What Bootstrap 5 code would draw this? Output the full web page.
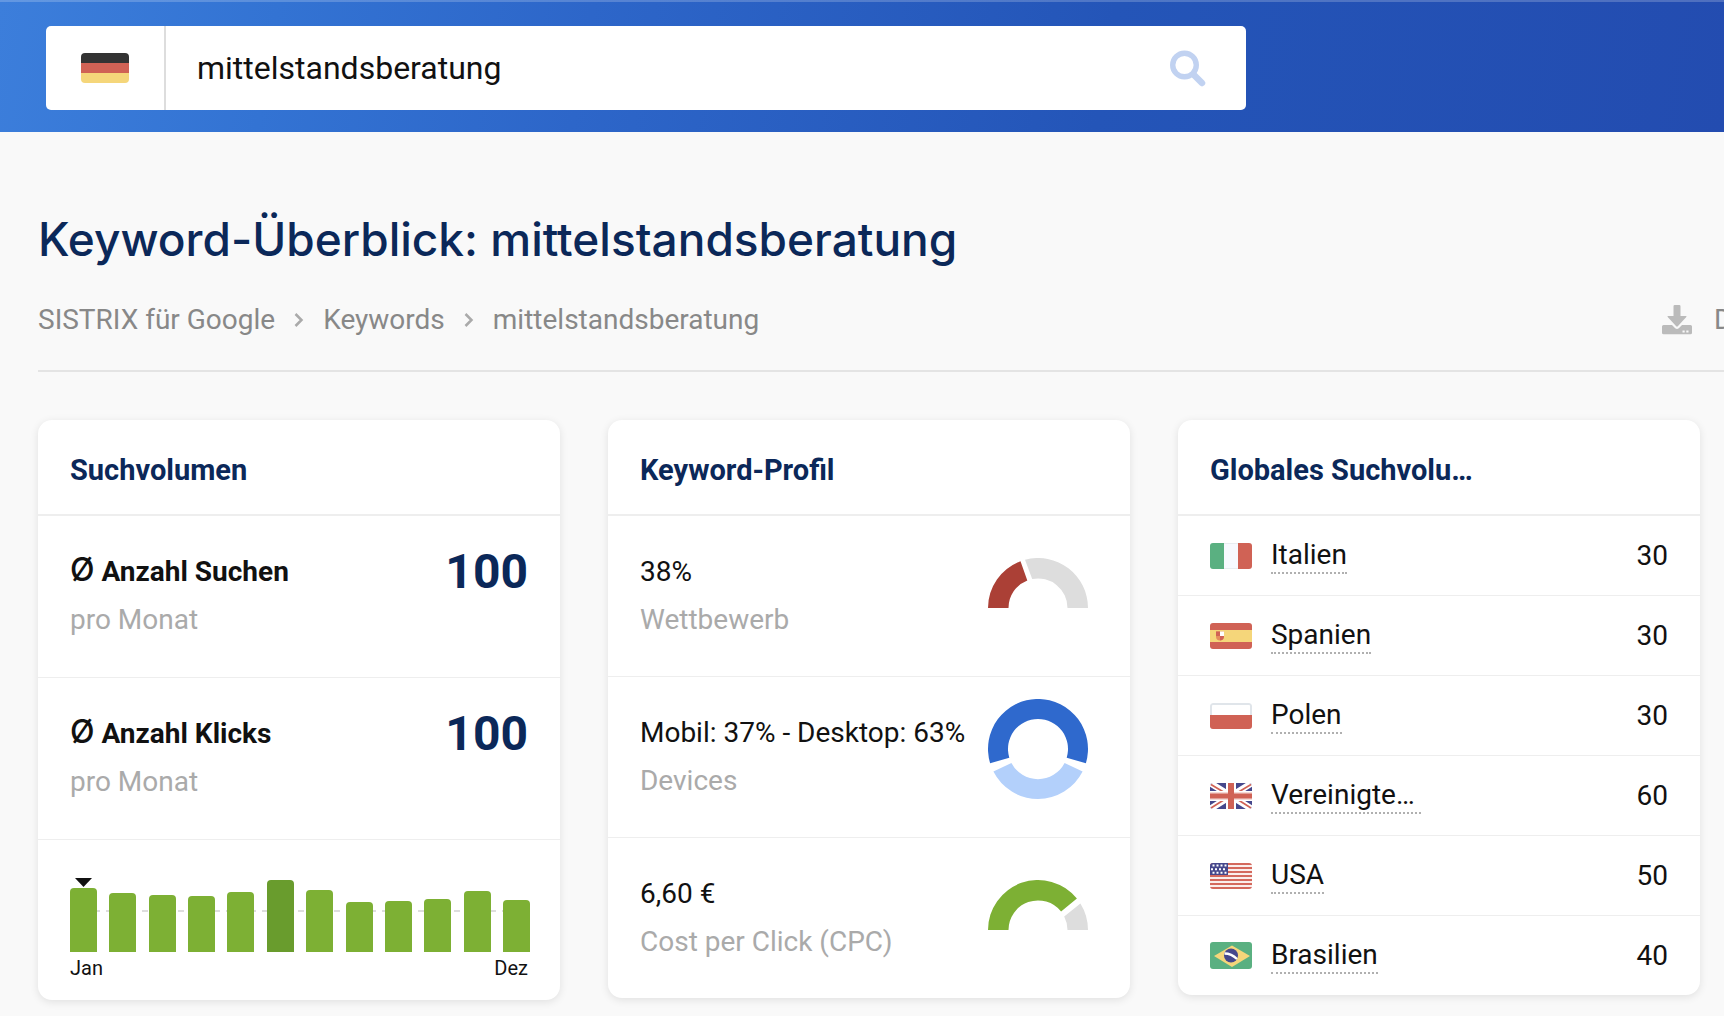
<!DOCTYPE html>
<html lang="de">
<head>
<meta charset="utf-8">
<meta name="viewport" content="width=device-width, initial-scale=1">
<title>Keyword-Überblick: mittelstandsberatung</title>
<link href="https://cdn.jsdelivr.net/npm/bootstrap@5.3.0/dist/css/bootstrap.min.css" rel="stylesheet">
<style>
  :root { --navy: #0b2859; --ink: #111; --muted: #aaa; --line: #eee; }
  body { font-family: Roboto, "Liberation Sans", sans-serif; font-size: 28px; line-height: 48px; color: var(--ink); background: #f9f9f9; overflow-x: hidden; }
  .topbar { background: linear-gradient(100deg, #3c7edb 0%, #3373d3 16%, #2d66c9 34%, #2455b8 64%, #234cb0 100%); border-top: 2px solid rgba(255,255,255,.2); background-origin: border-box; padding: 24px 46px 22px; }
  .searchbox { max-width: 1200px; height: 84px; border-radius: 5px; }
  .country-btn { width: 120px; border: 0; border-right: 2px solid #ddd; border-radius: 0; }
  .searchbox input { font-size: 32px; color: var(--ink); padding: 0 31px; border: 0; background: transparent; }
  .search-btn { border: 0; padding: 0 40px; }
  .page { padding: 75px 0 16px 38px; }
  .page-title { font-family: Inter, "Liberation Sans", sans-serif; font-size: 46px; line-height: 64px; font-weight: 500; color: var(--navy); margin-bottom: 31px; }
  .crumbs { border-bottom: 2px solid #e4e4e4; padding-bottom: 33px; margin-bottom: 48px; overflow: hidden; white-space: nowrap; }
  .crumbs a { color: #888; text-decoration: none; }
  .crumb-sep { margin: 0 19px; }
  .export-link { width: 62px; gap: 22px; }
  .tiles { --bs-gutter-x: 48px; margin-right: 0; }
  .tile { border: 0; border-radius: 14px; box-shadow: 0 2px 8px rgba(0,0,0,.1); overflow: hidden; }
  .tile-head { padding: 26px 32px 20px; border-bottom: 2px solid var(--line); }
  .tile-head h2 { font-size: 29px; line-height: 48px; font-weight: 700; color: var(--navy); max-width: 276px; margin: 0; }
  .section { padding: 22px 32px; border-top: 1px solid var(--line); height: 161px; }
  .tile-head + .section { border-top: 0; height: 160px; }
  .section .texts { padding-top: 10px; white-space: nowrap; }
  .section .sub { color: var(--muted); }
  .volume .section { height: 162px; }
  .volume .tile-head + .section { height: 161px; }
  .section.chart-section { padding: 38px 30px 8px 32px; height: 161px; }
  .avg { font-family: Inter, sans-serif; font-size: 32px; line-height: 1; font-weight: 500; }
  .big { font-size: 48px; font-weight: 700; color: var(--navy); padding-top: 10px; }
  .gauge-section { padding-right: 42px; }
  .half { margin-top: 20px; }
  .bars { position: relative; height: 74px; }
  .average-line { position: absolute; left: 0; right: 0; bottom: 40px; height: 2px; background: repeating-linear-gradient(90deg, #ddd 0 6px, transparent 6px 12px); }
  .bar { position: relative; width: 27px; background: #7db034; border-radius: 4px 4px 0 0; }
  .bar.peak { background: #699c2d; }
  .marker { position: absolute; left: 5px; top: -10px; }
  .axis { font-size: 20px; line-height: 32px; padding-right: 2px; }
  .country { height: 80px; padding: 0 32px; border-top: 1px solid var(--line); }
  .tile-head + .country { border-top: 0; height: 79px; }
  .country svg { flex: none; margin-right: 19px; }
  .country a { color: var(--ink); text-decoration: none; line-height: 34px; border-bottom: 2px dotted #b0b0b0; max-width: 150px; }
</style>
</head>
<body>
<header class="topbar">
  <form class="searchbox bg-white d-flex overflow-hidden" role="search">
    <button type="button" class="btn country-btn flex-shrink-0 d-flex align-items-center justify-content-center p-0" aria-label="Land: Deutschland">
      <svg width="48" height="30" viewBox="0 0 48 30"><defs><clipPath id="de"><rect width="48" height="30" rx="4"/></clipPath></defs><g clip-path="url(#de)"><rect width="48" height="10" fill="#333"/><rect y="10" width="48" height="10" fill="#d06255"/><rect y="20" width="48" height="10" fill="#f5d67a"/></g></svg>
    </button>
    <input class="flex-grow-1 shadow-none form-control rounded-0" type="text" aria-label="Keyword" value="mittelstandsberatung">
    <button type="submit" class="btn search-btn d-flex align-items-center" aria-label="Suchen">
      <svg width="36" height="37" viewBox="0 0 36 37" fill="none" stroke="#c1d2f1"><circle cx="14.500" cy="15" r="11.800" stroke-width="5.400"/><path d="M24 25l8 8" stroke-width="6.500" stroke-linecap="round"/></svg>
    </button>
  </form>
</header>

<main class="page">
  <h1 class="page-title">Keyword-Überblick: mittelstandsberatung</h1>
  <div class="crumbs d-flex align-items-center justify-content-between">
    <nav class="d-flex align-items-center lh-sm" aria-label="Brotkrumen">
      <a href="#">SISTRIX für Google</a>
      <svg class="crumb-sep" width="10" height="16" viewBox="0 0 10 16" fill="none" stroke="#aaa" stroke-width="2.500"><path d="M1.500 2l6 6-6 6"/></svg>
      <a href="#">Keywords</a>
      <svg class="crumb-sep" width="10" height="16" viewBox="0 0 10 16" fill="none" stroke="#aaa" stroke-width="2.500"><path d="M1.500 2l6 6-6 6"/></svg>
      <a href="#">mittelstandsberatung</a>
    </nav>
    <a href="#" class="export-link flex-shrink-0 d-flex align-items-center lh-sm">
      <svg class="flex-shrink-0" width="30" height="30" viewBox="0 0 30 30" fill="#bbb"><path d="M12.800 0h4.400q1.300 0 1.300 1.300V11h5.300q1.400 0 .5 1.100l-8.500 9.200q-.8.800-1.600 0L5.700 12.100Q4.800 11 6.200 11h5.300V1.300Q11.500 0 12.800 0z"/><path fill-rule="evenodd" d="M1.500 20H10l3.200 3.300q1.800 1.600 3.600 0L20 20h8.500q1.500 0 1.500 1.500v6.300q0 1.500-1.500 1.500h-27Q0 29.300 0 27.800v-6.300Q0 20 1.500 20zM20.500 25.500v2h2.200v-2zm3.800 0v2h2.200v-2z"/></svg>
      <span>Download</span>
    </a>
  </div>

  <div class="row tiles align-items-start">
    <div class="col-4">
      <section class="card tile volume">
        <div class="tile-head"><h2 class="text-truncate">Suchvolumen</h2></div>
        <div class="section d-flex justify-content-between">
          <div class="texts"><div class="fw-bold"><span class="avg">Ø</span> Anzahl Suchen</div><div class="sub">pro Monat</div></div>
          <div class="big">100</div>
        </div>
        <div class="section d-flex justify-content-between">
          <div class="texts"><div class="fw-bold"><span class="avg">Ø</span> Anzahl Klicks</div><div class="sub">pro Monat</div></div>
          <div class="big">100</div>
        </div>
        <div class="section chart-section">
          <div class="bars d-flex align-items-end justify-content-between">
            <div class="average-line"></div>
            <div class="bar" style="height:64px"><svg class="marker" width="17" height="9" viewBox="0 0 17 9"><path d="M0 0h17L8.500 9z" fill="#111"/></svg></div>
            <div class="bar" style="height:59px"></div>
            <div class="bar" style="height:57px"></div>
            <div class="bar" style="height:56px"></div>
            <div class="bar" style="height:60px"></div>
            <div class="bar peak" style="height:72px"></div>
            <div class="bar" style="height:62px"></div>
            <div class="bar" style="height:50px"></div>
            <div class="bar" style="height:51px"></div>
            <div class="bar" style="height:53px"></div>
            <div class="bar" style="height:61px"></div>
            <div class="bar" style="height:52px"></div>
          </div>
          <div class="axis d-flex justify-content-between"><span>Jan</span><span>Dez</span></div>
        </div>
      </section>
    </div>

    <div class="col-4">
      <section class="card tile">
        <div class="tile-head"><h2 class="text-truncate">Keyword-Profil</h2></div>
        <div class="section gauge-section d-flex justify-content-between align-items-start">
          <div class="texts"><div>38%</div><div class="sub">Wettbewerb</div></div>
          <svg class="half flex-shrink-0" width="100" height="50" viewBox="-50 -50 100 50"><path fill="#ab4036" d="M-50 0A50 50 0 0 1-17.500-46.800L-10.700-27.500A29.500 29.500 0 0 0-29.500 0z"/><path fill="#ddd" d="M-13-48.300A50 50 0 0 1 50 0H29.500A29.500 29.500 0 0 0-5.800-29z"/></svg>
        </div>
        <div class="section gauge-section d-flex justify-content-between align-items-start">
          <div class="texts"><div>Mobil: 37% - Desktop: 63%</div><div class="sub">Devices</div></div>
          <svg class="flex-shrink-0" width="100" height="100" viewBox="-50 -50 100 100"><path fill="#2f69cd" d="M-47.900 14.300A50 50 0 1 1 47.900 14.300L28.700 8.700A30 30 0 1 0-28.700 8.700z"/><path fill="#b3d0fb" d="M-44.600 22.600A50 50 0 0 0 44.600 22.600L26.600 14A30 30 0 0 1-26.600 14z"/></svg>
        </div>
        <div class="section gauge-section d-flex justify-content-between align-items-start">
          <div class="texts"><div>6,60 €</div><div class="sub">Cost per Click (CPC)</div></div>
          <svg class="half flex-shrink-0" width="100" height="50" viewBox="-50 -50 100 50"><path fill="#7db034" d="M-50 0A50 50 0 0 1 38.900-31.400L23.100-18.400A29.500 29.500 0 0 0-29.500 0z"/><path fill="#ddd" d="M42.400-26.500A50 50 0 0 1 50 0H29.500A29.500 29.500 0 0 0 26.200-13.400z"/></svg>
        </div>
      </section>
    </div>

    <div class="col-4">
      <section class="card tile">
        <div class="tile-head"><h2 class="text-truncate">Globales Suchvolumen</h2></div>
        <div class="country d-flex align-items-center">
          <svg width="42" height="26" viewBox="0 0 42 26"><defs><clipPath id="fl"><rect width="42" height="26" rx="3"/></clipPath></defs><g clip-path="url(#fl)"><rect width="42" height="26" fill="#f7f9fe"/><path d="M14 .5h14M14 25.500h14" stroke="#e8ecf0"/><rect width="14" height="26" fill="#5ab081"/><rect x="28" width="14" height="26" fill="#d06255"/></g></svg>
          <a href="#" class="text-truncate">Italien</a><span class="ms-auto">30</span>
        </div>
        <div class="country d-flex align-items-center">
          <svg width="42" height="26" viewBox="0 0 42 26"><g clip-path="url(#fl)"><rect width="42" height="26" fill="#d06255"/><rect y="7" width="42" height="12" fill="#f5d67a"/><path d="M6 8.500h8v5q0 4-4 4t-4-4z" fill="#e58d5c"/><path d="M6 8.500h4v4.500H6zM10 13h4q0 4-4 4.500z" fill="#d06255"/><path d="M10 8.500h4V13h-4z" fill="#fff"/></g></svg>
          <a href="#" class="text-truncate">Spanien</a><span class="ms-auto">30</span>
        </div>
        <div class="country d-flex align-items-center">
          <svg width="42" height="26" viewBox="0 0 42 26"><g clip-path="url(#fl)"><rect x="1" y="1" width="40" height="24" rx="2" fill="#fff" stroke="#e0e5ea" stroke-width="2"/><rect y="12" width="42" height="14" fill="#d06255"/></g></svg>
          <a href="#" class="text-truncate">Polen</a><span class="ms-auto">30</span>
        </div>
        <div class="country d-flex align-items-center">
          <svg width="42" height="26" viewBox="0 0 42 26"><g clip-path="url(#fl)"><rect width="42" height="26" fill="#46488c"/><path d="M0 0l42 26M42 0L0 26" stroke="#fff" stroke-width="6.500"/><path d="M1 1.500L16 10.500M41 1.500L26 10.500M1 25l15-9.500M41 25l-15-9.500" stroke="#d06255" stroke-width="1.700"/><path d="M21 0v26M0 13h42" stroke="#fff" stroke-width="10"/><path d="M0 13h42" stroke="#e9b3ad" stroke-width="7"/><path d="M21 0v26" stroke="#d06255" stroke-width="6"/><path d="M0 13h42" stroke="#d06255" stroke-width="4.500"/></g></svg>
          <a href="#" class="text-truncate">Vereinigtes Königreich</a><span class="ms-auto">60</span>
        </div>
        <div class="country d-flex align-items-center">
          <svg width="42" height="26" viewBox="0 0 42 26"><g clip-path="url(#fl)"><rect width="42" height="26" fill="#fbeeec"/><path d="M0 1h42M0 5h42M0 9h42M0 13h42M0 17h42M0 21h42M0 25h42" stroke="#d4695d" stroke-width="1.900"/><rect width="18" height="12" fill="#46488c"/><path d="M2.500 2.600h14M1 6.200h16M2.500 9.800h14" stroke="#fff" stroke-width="2" stroke-dasharray="2 2"/></g></svg>
          <a href="#" class="text-truncate">USA</a><span class="ms-auto">50</span>
        </div>
        <div class="country d-flex align-items-center">
          <svg width="42" height="27" viewBox="0 0 42 27"><rect width="42" height="27" rx="3" fill="#5ab081"/><path d="M4 14L22 3.500 40 14 22 25z" fill="#f5d67a"/><circle cx="21" cy="13.500" r="7" fill="#46488c"/><path d="M14.500 11.500q7 0 12.500 5.500" stroke="#fff" stroke-width="2.400" fill="none"/></svg>
          <a href="#" class="text-truncate">Brasilien</a><span class="ms-auto">40</span>
        </div>
      </section>
    </div>
  </div>
</main>
<script src="https://cdn.jsdelivr.net/npm/bootstrap@5.3.0/dist/js/bootstrap.bundle.min.js"></script>
</body>
</html>
